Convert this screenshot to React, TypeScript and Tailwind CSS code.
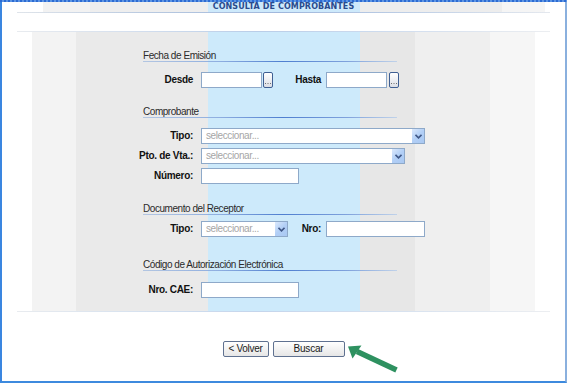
import React from "react";

const txt = "font-['Liberation_Sans',Arial,sans-serif]";

function Input({ className }: { className: string }) {
  return <div className={`h-[16px] border border-[#8ea9c9] bg-white ${className}`} />;
}

function DotsBtn() {
  return (
    <div className="ml-[1px] flex h-[16px] w-[10px] items-end justify-center rounded-[2px] border border-[#3f5f93] bg-[linear-gradient(180deg,#ffffff,#dcdfe6)] pb-[3px]">
      <svg width="6" height="1" viewBox="0 0 6 1">
        <rect x="0" y="0" width="1" height="1" fill="#707070" />
        <rect x="2.5" y="0" width="1" height="1" fill="#707070" />
        <rect x="5" y="0" width="1" height="1" fill="#707070" />
      </svg>
    </div>
  );
}

function Select({ className }: { className: string }) {
  return (
    <div className={`flex h-[16px] items-center justify-between border border-[#8ea9c9] bg-white ${className}`}>
      <span className={`${txt} pl-[4px] text-[10px] leading-[14px] tracking-[-0.4px] text-[#a6a6a6]`}>seleccionar...</span>
      <div className="flex h-[14px] w-[12px] items-center justify-center bg-[linear-gradient(135deg,#dce9fc,#b2cff6_50%,#a9c8f2)]">
        <svg width="7" height="5" viewBox="0 0 7 5">
          <path d="M0.5 0.8 L3.5 3.8 L6.5 0.8" fill="none" stroke="#3f5786" strokeWidth="1.6" />
        </svg>
      </div>
    </div>
  );
}

function Label({ children, className = "" }: { children: React.ReactNode; className?: string }) {
  return (
    <div className={`flex w-[50px] shrink-0 justify-end whitespace-nowrap ${txt} text-[10px] font-bold leading-[12px] tracking-[-0.3px] text-[#111] ${className}`}>
      {children}
    </div>
  );
}

function Title({ children }: { children: React.ReactNode }) {
  return (
    <div className="w-[254px]">
      <div className={`h-[12px] pt-[2px] ${txt} whitespace-nowrap text-[10px] leading-[10px] tracking-[-0.45px] text-[#2b2b2b]`}>{children}</div>
      <div className="h-px bg-[linear-gradient(90deg,#b3c6e2,#8eaee0_30%,#4f7fd0_55%,#7fa2dc_80%,#c0d2ea)]" />
    </div>
  );
}

export default function App() {
  return (
    <div className="relative flex h-[383px] w-[567px] flex-col overflow-hidden bg-white">
      <div className="h-[2px] w-full bg-[repeating-linear-gradient(90deg,#2c6bd3_0px,#2c6bd3_2px,#5d95e3_2px,#5d95e3_4px)]" />
      <div className="flex flex-1 flex-col border-b-2 border-l-2 border-r-2 border-b-[#3d8ade] border-l-[#3a86e0] border-r-[#8ab0de]">
        {/* header */}
        <div className="flex h-[10px] items-center justify-center bg-[linear-gradient(90deg,#ffffff_0px,#ffffff_41px,#f2f2f2_41px,#f2f2f2_88px,#eeeeee_88px,#eeeeee_206px,#cde9fb_206px,#cde9fb_358px,#ededed_358px,#ededed_500px,#f5f5f5_500px,#f5f5f5_543px,#ffffff_543px)]">
          <span className="font-['DejaVu_Sans',Verdana,sans-serif] text-[8px] font-bold leading-[10px] tracking-[0.1px] text-[#2a4b8d]">
            CONSULTA DE COMPROBANTES
          </span>
        </div>
        <div className="ml-[15px] h-px w-[533px] bg-[linear-gradient(90deg,#dfe4ea,#b8c9e0_25%,#9fb7dc_50%,#c0d0e6_75%,#e4e8ee)]" />
        <div className="h-[18px]" />
        <div className="ml-[15px] h-px w-[533px] bg-[linear-gradient(90deg,#e8ebef,#d6e0ee_20%,#b9cde8_45%,#cfdcee_70%,#eceef1)]" />
        {/* panel */}
        <div className="ml-[30px] h-[279px] w-[503px] bg-[linear-gradient(90deg,#f3f3f3_0px,#f3f3f3_44px,#eaeaea_44px,#eaeaea_176px,#cdeafb_176px,#cdeafb_328px,#e7e7e7_328px,#e7e7e7_383px,#efefef_383px,#efefef_458px,#f6f6f6_458px,#f6f6f6_503px)] pl-[111px] pt-[17px]">
          <Title>Fecha de Emisión</Title>
          <div className="mt-[10px] flex h-[16px] items-center">
            <Label>Desde</Label>
            <Input className="ml-[8px] w-[61px]" />
            <DotsBtn />
            <div className={`flex w-[48px] justify-end ${txt} text-[10px] font-bold leading-[12px] tracking-[-0.3px] text-[#111]`}>Hasta</div>
            <Input className="ml-[5px] w-[61px]" />
            <div className="ml-[1px]">
              <DotsBtn />
            </div>
          </div>

          <div className="mt-[17px]">
            <Title>Comprobante</Title>
          </div>
          <div className="mt-[10px] flex h-[16px] items-center">
            <Label>Tipo:</Label>
            <Select className="ml-[8px] w-[224px]" />
          </div>
          <div className="mt-[4px] flex h-[16px] items-center">
            <Label>Pto. de Vta.:</Label>
            <Select className="ml-[8px] w-[204px]" />
          </div>
          <div className="mt-[4px] flex h-[16px] items-center">
            <Label>Número:</Label>
            <Input className="ml-[8px] w-[98px]" />
          </div>

          <div className="mt-[18px]">
            <Title>Documento del Receptor</Title>
          </div>
          <div className="mt-[6px] flex h-[16px] items-center">
            <Label>Tipo:</Label>
            <Select className="ml-[8px] w-[87px]" />
            <div className={`flex w-[33px] justify-end ${txt} text-[10px] font-bold leading-[12px] tracking-[-0.3px] text-[#111]`}>Nro:</div>
            <Input className="ml-[5px] w-[99px]" />
          </div>

          <div className="mt-[21px]">
            <Title>Código de Autorización Electrónica</Title>
          </div>
          <div className="mt-[11px] flex h-[16px] items-center">
            <Label>Nro. CAE:</Label>
            <Input className="ml-[8px] w-[98px]" />
          </div>
        </div>
        <div className="ml-[15px] h-px w-[533px] bg-[linear-gradient(90deg,#e8ebef,#d9e3ef_20%,#c4d5ec_45%,#d6e1ef_70%,#eceef1)]" />
        <div className="h-[29px]" />
        <div className="flex h-[16px] justify-center gap-[4px]">
          <button className={`flex h-[16px] w-[46px] items-center justify-center rounded-[2px] border border-[#5f7190] bg-[linear-gradient(180deg,#ffffff,#e6e6e6)] ${txt} text-[10px] leading-[12px] tracking-[-0.3px] text-[#1a1a1a]`}>
            &lt; Volver
          </button>
          <button className={`flex h-[16px] w-[72px] items-center justify-center rounded-[2px] border border-[#5f7190] bg-[linear-gradient(180deg,#ffffff,#e6e6e6)] ${txt} text-[10px] leading-[12px] tracking-[-0.2px] text-[#1a1a1a]`}>
            Buscar
          </button>
        </div>
        <div className="flex-1" />
      </div>
      <svg className="pointer-events-none absolute left-0 top-0" width="567" height="383" viewBox="0 0 567 383">
        <line x1="396.5" y1="370" x2="357" y2="351.5" stroke="#2e9160" strokeWidth="5.5" />
        <polygon points="348,346.5 361.5,345.5 352.5,358.5" fill="#2e9160" />
      </svg>
    </div>
  );
}
